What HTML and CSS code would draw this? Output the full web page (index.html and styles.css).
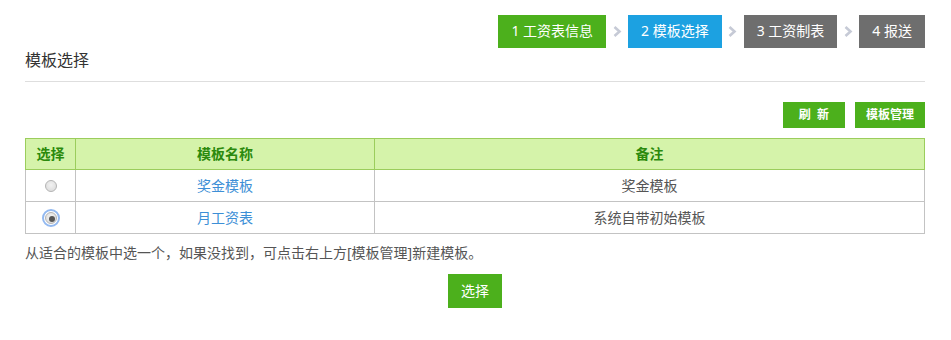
FILE: index.html
```html
<!DOCTYPE html>
<html lang="zh-CN">
<head>
    <meta charset="UTF-8">
    <title>模板选择</title>
    <link rel="stylesheet" href="styles.css">
</head>
<body>
    <div class="page">
        <div class="steps">
            <span class="step done">1 工资表信息</span>
            <span class="step-arrow"><svg width="9" height="11" viewBox="0 0 9 11"><path d="M1.5 1 L6.5 5.5 L1.5 10" fill="none" stroke="#c6cad6" stroke-width="2.6"/></svg></span>
            <span class="step current">2 模板选择</span>
            <span class="step-arrow"><svg width="9" height="11" viewBox="0 0 9 11"><path d="M1.5 1 L6.5 5.5 L1.5 10" fill="none" stroke="#c6cad6" stroke-width="2.6"/></svg></span>
            <span class="step">3 工资制表</span>
            <span class="step-arrow"><svg width="9" height="11" viewBox="0 0 9 11"><path d="M1.5 1 L6.5 5.5 L1.5 10" fill="none" stroke="#c6cad6" stroke-width="2.6"/></svg></span>
            <span class="step">4 报送</span>
        </div>

        <h2 class="section-title">模板选择</h2>

        <div class="toolbar">
            <button class="btn btn-small">刷&nbsp;&nbsp;新</button>
            <button class="btn btn-small">模板管理</button>
        </div>

        <table class="tpl-table">
            <thead>
                <tr>
                    <th class="col-check">选择</th>
                    <th class="col-name">模板名称</th>
                    <th>备注</th>
                </tr>
            </thead>
            <tbody>
                <tr>
                    <td><input type="radio" name="tpl" class="radio"></td>
                    <td><a href="#" class="tpl-link">奖金模板</a></td>
                    <td>奖金模板</td>
                </tr>
                <tr>
                    <td><input type="radio" name="tpl" class="radio focused" checked></td>
                    <td><a href="#" class="tpl-link">月工资表</a></td>
                    <td>系统自带初始模板</td>
                </tr>
            </tbody>
        </table>

        <p class="hint">从适合的模板中选一个，如果没找到，可点击右上方[模板管理]新建模板。</p>

        <div class="actions">
            <button class="btn btn-large">选择</button>
        </div>
    </div>
</body>
</html>
```

FILE: styles.css
```css
body {
    margin: 0;
    background: #fff;
    font-family: "Noto Sans", "Noto Sans CJK SC", sans-serif;
    color: #555;
}

.page {
    padding: 0 26px 0 25px;
}

/* step bar */
.steps {
    display: flex;
    justify-content: flex-end;
    align-items: center;
    padding-top: 15px;
}

.step {
    height: 33px;
    line-height: 31px;
    padding: 0 13px 2px;
    box-sizing: border-box;
    font-size: 14px;
    color: #fff;
    background: #6e6e6e;
    white-space: nowrap;
}

.step.done { background: #4cb01c; }
.step.current { background: #1ca1e1; }

.step-arrow {
    width: 22px;
    display: flex;
    justify-content: center;
    align-items: center;
}

.section-title {
    margin: 0;
    font-size: 16px;
    font-weight: normal;
    line-height: 22px;
    color: #333;
    padding: 1px 0 10px;
    border-bottom: 1px solid #dedede;
}

/* buttons */
.btn {
    border: none;
    background: #4cb01c;
    color: #fff;
    font-family: inherit;
    cursor: pointer;
}

.toolbar {
    display: flex;
    justify-content: flex-end;
    gap: 10px;
    margin-top: 20px;
}

.btn-small {
    height: 26px;
    min-width: 62px;
    padding: 0 11px 2px;
    font-size: 12px;
    font-weight: bold;
}

.btn-large {
    height: 34px;
    padding: 0 13px 2px;
    font-size: 14px;
}

/* table */
.tpl-table {
    width: 100%;
    margin-top: 10px;
    border-collapse: collapse;
    font-size: 14px;
}

.tpl-table th {
    height: 28px;
    padding: 0 0 2px;
    background: #d5f3aa;
    border: 1px solid #9bcd5c;
    color: #2b8a0d;
    font-weight: bold;
}

.tpl-table td {
    height: 29px;
    padding: 0 0 2px;
    border: 1px solid #c3c3c3;
    text-align: center;
    color: #555;
}

.col-check { width: 49px; }
.col-name { width: 298px; }

.tpl-link {
    color: #3d8fd6;
    text-decoration: none;
}

.radio {
    appearance: none;
    -webkit-appearance: none;
    width: 12px;
    height: 12px;
    margin: 0;
    vertical-align: middle;
    border-radius: 50%;
    border: 1px solid #b5b5b5;
    background: radial-gradient(circle at 50% 40%, #f2f2f2 0%, #d8d8d8 100%);
    position: relative;
}

.radio:checked::after {
    content: '';
    position: absolute;
    left: 3px;
    top: 3px;
    width: 6px;
    height: 6px;
    border-radius: 50%;
    background: #555;
}

.radio.focused {
    outline: 2px solid #93b9f0;
    outline-offset: 1px;
}

.hint {
    margin: 9px 0 0;
    font-size: 14px;
    line-height: 20px;
    color: #555;
}

.actions {
    display: flex;
    justify-content: center;
    margin-top: 11px;
}
```
